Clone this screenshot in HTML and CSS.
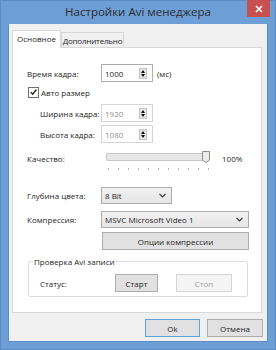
FILE: index.html
```html
<!DOCTYPE html>
<html lang="ru">
<head>
    <meta charset="UTF-8">
    <title>Настройки Avi менеджера</title>
    <link rel="stylesheet" href="styles.css">
</head>
<body>
    <div class="window">
        <div class="titlebar">
            <span class="title">Настройки Avi менеджера</span>
            <span class="close">
                <svg width="8" height="8" viewBox="0 0 8 8"><path d="M1 1L7 7M7 1L1 7" stroke="#fff" stroke-width="1.6"/></svg>
            </span>
        </div>

        <div class="client">
            <!-- Tabs -->
            <div class="tabs">
                <div class="tab active">Основное</div>
                <div class="tab">Дополнительно</div>
            </div>

            <div class="panel">
                <div class="row row-time">
                    <span class="label">Время кадра:</span>
                    <div class="spin">
                        <span class="spin-value">1000</span>
                        <span class="spin-arrows"><i class="up"></i><i class="down"></i></span>
                    </div>
                    <span class="unit">(мс)</span>
                </div>

                <div class="row row-check">
                    <span class="checkbox">
                        <svg width="10" height="10" viewBox="0 0 10 10"><path d="M2 5.2L4.1 7.4L8.2 2.2" fill="none" stroke="#222" stroke-width="1.5"/></svg>
                    </span>
                    <span>Авто размер</span>
                </div>

                <div class="row row-width indent">
                    <span class="label">Ширина кадра:</span>
                    <div class="spin disabled">
                        <span class="spin-value">1920</span>
                        <span class="spin-arrows"><i class="up"></i><i class="down"></i></span>
                    </div>
                </div>

                <div class="row row-height indent">
                    <span class="label">Высота кадра:</span>
                    <div class="spin disabled">
                        <span class="spin-value">1080</span>
                        <span class="spin-arrows"><i class="up"></i><i class="down"></i></span>
                    </div>
                </div>

                <div class="row row-quality">
                    <span class="label">Качество:</span>
                    <div class="slider">
                        <div class="track"></div>
                        <span class="thumb">
                            <svg width="8" height="12" viewBox="0 0 8 12"><path d="M0.5 0.5H7.5V9L4 11.5L0.5 9Z" fill="#ececec" stroke="#8c8c8c"/></svg>
                        </span>
                        <div class="ticks">
                            <i></i><i></i><i></i><i></i><i></i><i></i><i></i><i></i><i></i><i></i><i></i>
                        </div>
                    </div>
                    <span class="percent">100%</span>
                </div>

                <div class="row row-depth">
                    <span class="label">Глубина цвета:</span>
                    <div class="combo combo-small">
                        <span>8 Bit</span>
                        <svg width="7" height="5" viewBox="0 0 7 5"><path d="M0.5 0.8L3.5 3.8L6.5 0.8" fill="none" stroke="#333" stroke-width="1.2"/></svg>
                    </div>
                </div>

                <div class="row row-compress">
                    <span class="label">Компрессия:</span>
                    <div class="combo combo-wide">
                        <span>MSVC Microsoft Video 1</span>
                        <svg width="7" height="5" viewBox="0 0 7 5"><path d="M0.5 0.8L3.5 3.8L6.5 0.8" fill="none" stroke="#333" stroke-width="1.2"/></svg>
                    </div>
                </div>

                <div class="row row-options">
                    <button class="btn btn-options">Опции компрессии</button>
                </div>

                <!-- Avi check group -->
                <div class="group">
                    <span class="legend">Проверка Avi записи</span>
                    <div class="row row-status">
                        <span class="label">Статус:</span>
                        <button class="btn btn-start">Старт</button>
                        <button class="btn btn-stop" disabled>Стоп</button>
                    </div>
                </div>
            </div>

            <div class="actions">
                <button class="btn btn-ok">Ok</button>
                <button class="btn btn-cancel">Отмена</button>
            </div>
        </div>
    </div>
</body>
</html>
```

FILE: styles.css
```css
/* Windows 8 style dialog */
body {
    margin: 0;
    padding: 0;
    font-family: "Open Sans", "Noto Sans", sans-serif;
    font-size: 8px;
    color: #1e1e1e;
}

.window {
    width: 276px;
    height: 350px;
    box-sizing: border-box;
    background-color: #6d9fd6;
    border: 1px solid #5b8cc4;
    padding: 0 7px 7px 7px;
    display: flex;
    flex-direction: column;
}

.titlebar {
    position: relative;
    height: 22px;
    display: flex;
    align-items: center;
    justify-content: center;
}

.title {
    font-size: 11.5px;
    color: #2b2b2b;
    margin-top: -1px;
}

.close {
    position: absolute;
    top: -1px;
    right: -2px;
    width: 23px;
    height: 17px;
    background-color: #c8504e;
    display: flex;
    align-items: center;
    justify-content: center;
}

.client {
    flex: 1;
    background-color: #f0f0f0;
    border: 1px solid #5b8cc4;
    border-top-color: #6d9fd6;
    padding: 6px 0 0 3px;
    display: flex;
    flex-direction: column;
}

.tabs {
    display: flex;
    align-items: flex-end;
    height: 17px;
    position: relative;
    z-index: 1;
}

.tab {
    box-sizing: border-box;
    width: 63px;
    height: 15px;
    padding: 0 2px;
    border: 1px solid #d9d9d9;
    border-bottom: none;
    background-color: #f0f0f0;
    display: flex;
    align-items: center;
    justify-content: center;
    letter-spacing: -0.2px;
}

.tab.active {
    width: 49px;
    height: 18px;
    margin-bottom: -1px;
    background-color: #fff;
    padding: 0 2px 2px;
    letter-spacing: 0;
}

.panel {
    box-sizing: border-box;
    width: 250px;
    height: 266px;
    background-color: #fff;
    border: 1px solid #d9d9d9;
    padding: 16px 0 0 14px;
    display: flex;
    flex-direction: column;
}

.row {
    display: flex;
    align-items: center;
}

.label {
    width: 74px;
    flex: none;
}

.indent {
    padding-left: 13px;
}

.indent .label {
    width: 61px;
}

.row-time { height: 18px; }
.row-check { height: 12px; margin-top: 4px; }
.row-width { height: 18px; margin-top: 6px; }
.row-height { height: 18px; margin-top: 3px; }
.row-quality { height: 22px; margin-top: 8px; align-items: flex-start; }
.row-depth { height: 18px; margin-top: 13px; }
.row-compress { height: 18px; margin-top: 6px; }
.row-options { height: 18px; margin-top: 4px; padding-left: 75px; }

/* spin boxes */
.spin {
    box-sizing: border-box;
    width: 52px;
    height: 18px;
    border: 1px solid #abadb3;
    display: flex;
    align-items: center;
    justify-content: space-between;
    padding: 0 5px 0 3px;
    background-color: #fff;
}

.spin.disabled {
    border-color: #d5d5d5;
    color: #8f8f8f;
}

.spin-arrows {
    width: 8px;
    height: 11px;
    display: flex;
    flex-direction: column;
    justify-content: space-between;
    align-items: center;
    background-color: #e6e6e6;
    border: 1px solid #c4c4c4;
    box-sizing: border-box;
    padding: 1px 0;
}

.spin-arrows i {
    width: 0;
    height: 0;
    border-left: 2.5px solid transparent;
    border-right: 2.5px solid transparent;
}

.spin-arrows .up {
    border-bottom: 3px solid #111;
}

.spin-arrows .down {
    border-top: 3px solid #111;
}

.unit {
    margin-left: 4px;
}

/* checkbox */
.checkbox {
    box-sizing: border-box;
    width: 11px;
    height: 11px;
    border: 1px solid #707070;
    background-color: #fff;
    margin-right: 2px;
    margin-left: 1px;
    display: flex;
    align-items: center;
    justify-content: center;
}

/* slider */
.row-quality .label {
    margin-top: 2px;
}

.slider {
    position: relative;
    width: 105px;
    height: 22px;
    margin-left: 5px;
}

.track {
    box-sizing: border-box;
    margin-top: 2px;
    width: 104px;
    height: 8px;
    border: 1px solid #c6c6c6;
    border-radius: 2px;
    background-color: #e7e7e7;
}

.thumb {
    position: absolute;
    top: 0;
    right: 1px;
    line-height: 0;
}

.ticks {
    display: flex;
    justify-content: space-between;
    width: 101px;
    margin: 7px 0 0 2px;
}

.ticks i {
    width: 1px;
    height: 2px;
    background-color: #b0b0b0;
}

.percent {
    margin-left: 11px;
    margin-top: 2px;
}

/* combo boxes */
.combo {
    box-sizing: border-box;
    height: 17px;
    border: 1px solid #acacac;
    background: linear-gradient(#f2f2f2, #e5e5e5);
    display: flex;
    align-items: center;
    justify-content: space-between;
    padding: 0 5px 0 3px;
}

.combo-small { width: 71px; }
.combo-wide { width: 148px; }

/* buttons */
.btn {
    box-sizing: border-box;
    font-family: inherit;
    font-size: 8px;
    color: #1e1e1e;
    height: 18px;
    padding: 0;
    border: 1px solid #adadad;
    background-color: #e1e1e1;
}

.btn-options {
    width: 147px;
}

.btn:disabled {
    border-color: #d5d5d5;
    background-color: #f4f4f4;
    color: #a0a0a0;
}

/* group box */
.group {
    position: relative;
    box-sizing: border-box;
    width: 220px;
    height: 36px;
    margin-top: 11px;
    margin-left: 1px;
    border: 1px solid #dcdcdc;
    border-radius: 2px;
    padding: 12px 0 0 11px;
}

.legend {
    position: absolute;
    top: -6px;
    left: 4px;
    padding: 0 1px;
    background-color: #fff;
}

.row-status .label {
    width: 75px;
}

.btn-start {
    width: 43px;
}

.btn-stop {
    width: 56px;
    margin-left: 18px;
}

.actions {
    display: flex;
    justify-content: flex-end;
    gap: 7px;
    margin-top: 6px;
    padding-right: 4px;
}

.btn-ok {
    width: 55px;
    border-color: #5fa2dc;
}

.btn-cancel {
    width: 56px;
}
```
